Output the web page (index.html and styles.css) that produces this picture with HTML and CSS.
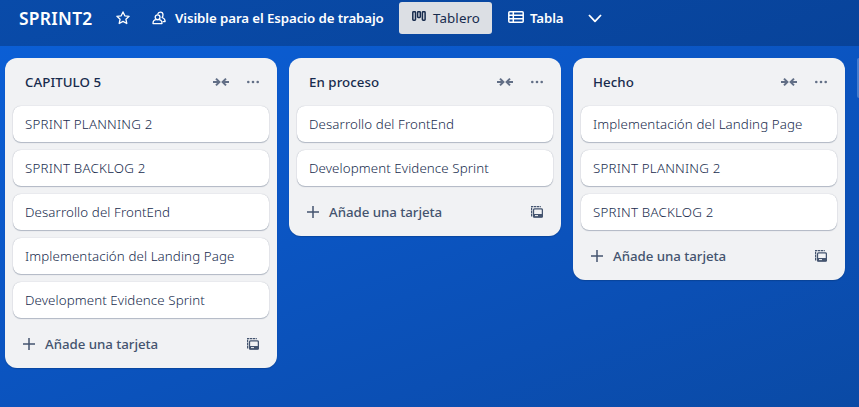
FILE: index.html
```
<!DOCTYPE html>
<html lang="es">
<head>
<meta charset="utf-8">
<title>SPRINT2</title>
<link rel="stylesheet" href="styles.css">
</head>
<body>
<svg class="defs" width="0" height="0" aria-hidden="true">
  <symbol id="collapse" viewBox="0 0 18 10"><path d="M1 5h6M4 1.6 7.4 5 4 8.4M17 5h-6M14 1.6 10.6 5l3.4 3.4" fill="none" stroke="currentColor" stroke-width="2"/></symbol>
  <symbol id="more" viewBox="0 0 12 4"><circle cx="1.3" cy="2" r="1.3"/><circle cx="6" cy="2" r="1.3"/><circle cx="10.7" cy="2" r="1.3"/></symbol>
  <symbol id="plus" viewBox="0 0 12 12"><path d="M6 0v12M0 6h12" fill="none" stroke="currentColor" stroke-width="1.5"/></symbol>
  <symbol id="template" viewBox="0 0 12 12"><path d="M.6 10.4V.6h9.2" fill="none" stroke="currentColor" stroke-width="1.2" stroke-dasharray="2.4 .6"/><rect x="2.5" y="2.9" width="8.9" height="8.3" rx="1" fill="none" stroke="currentColor" stroke-width="1.3"/><path d="M2.5 8h9v3.4h-9z"/><path d="M4 9.6h3" stroke="#f1f2f4" stroke-width="1"/></symbol>
</svg>
<header class="bar">
  <h1 class="title">SPRINT2</h1>
  <svg class="star" viewBox="0 0 14 14"><path d="m7 .9 1.8 3.9 4.3.5-3.2 2.9.9 4.3L7 10.4l-3.8 2.1.9-4.3L.9 5.3l4.3-.5z"/></svg>
  <svg class="people" viewBox="0 0 14 14"><path d="M1 12.6c0-2.4 1.3-3.9 3.3-3.9h2.4c2 0 3.3 1.5 3.3 3.9z"/><circle cx="5.6" cy="6.2" r="2.4"/><path d="M5.6 3.4C6 1.9 7 1.1 8.3 1.1c1.6 0 2.7 1.2 2.7 2.7 0 1.1-.3 2-.9 2.7 1.9.6 3 1.9 3 4.1h-2.5"/></svg>
  <span class="visibility">Visible para el Espacio de trabajo</span>
  <button class="view-active"><svg class="board-icon" viewBox="0 0 14 11"><rect x=".8" y=".8" width="2.7" height="8.4" rx=".7"/><rect x="5.6" y=".8" width="2.7" height="5.6" rx=".7"/><rect x="10.4" y=".8" width="2.7" height="8.4" rx=".7"/></svg><span>Tablero</span></button>
  <svg class="table-icon" viewBox="0 0 16 12"><rect x=".8" y=".8" width="14.4" height="10.4" rx="1"/><path d="M1 4.2h14M1 7.7h14M5.3 1v10"/></svg>
  <span class="table-label">Tabla</span>
  <svg class="chevron" viewBox="0 0 14 9"><path d="m1 1 6 6.4L13 1"/></svg>
</header>
<main class="board">
  <section class="list">
    <div class="head"><h2>CAPITULO 5</h2><svg class="collapse"><use href="#collapse"/></svg><svg class="more"><use href="#more"/></svg></div>
    <div class="card"><span class="caps">SPRINT PLANNING 2</span></div>
    <div class="card"><span class="caps">SPRINT BACKLOG 2</span></div>
    <div class="card"><span>Desarrollo del FrontEnd</span></div>
    <div class="card"><span>Implementación del Landing Page</span></div>
    <div class="card"><span>Development Evidence Sprint</span></div>
    <div class="foot"><svg class="plus"><use href="#plus"/></svg><span>Añade una tarjeta</span><svg class="template"><use href="#template"/></svg></div>
  </section>
  <section class="list">
    <div class="head"><h2>En proceso</h2><svg class="collapse"><use href="#collapse"/></svg><svg class="more"><use href="#more"/></svg></div>
    <div class="card"><span>Desarrollo del FrontEnd</span></div>
    <div class="card"><span>Development Evidence Sprint</span></div>
    <div class="foot"><svg class="plus"><use href="#plus"/></svg><span>Añade una tarjeta</span><svg class="template"><use href="#template"/></svg></div>
  </section>
  <section class="list">
    <div class="head"><h2>Hecho</h2><svg class="collapse"><use href="#collapse"/></svg><svg class="more"><use href="#more"/></svg></div>
    <div class="card"><span>Implementación del Landing Page</span></div>
    <div class="card"><span class="caps">SPRINT PLANNING 2</span></div>
    <div class="card"><span class="caps">SPRINT BACKLOG 2</span></div>
    <div class="foot"><svg class="plus"><use href="#plus"/></svg><span>Añade una tarjeta</span><svg class="template"><use href="#template"/></svg></div>
  </section>
  <div class="add-list"></div>
</main>
</body>
</html>
```
FILE: styles.css
```
* { box-sizing: border-box; }
body {
  margin: 0;
  height: 407px;
  overflow: hidden;
  font: 13.3px/20px "Noto Sans", "Open Sans", sans-serif;
  color: #172b4d;
  background: linear-gradient(160deg, #0b60d8 0%, #0b58c9 35%, #0b4fb4 75%, #0a4aa5 100%);
}
.defs { position: absolute; }
svg { display: block; flex: none; }
h1, h2 { margin: 0; }
span, h1, h2 { white-space: nowrap; }
.bar {
  height: 46px;
  padding: 0 0 10px 19px;
  display: flex;
  align-items: center;
  color: #fff;
  background: linear-gradient(160deg, #094ba9, #08439a);
}
.bar > svg { fill: none; stroke: currentColor; stroke-width: 1.3; stroke-linejoin: round; }
.title { width: 97px; font-size: 17.4px; line-height: 24px; font-weight: 600; letter-spacing: .3px; }
.star { width: 14px; height: 14px; }
.people { width: 14px; height: 14px; margin-left: 22px; }
.visibility { width: 224px; margin-left: 9px; font-weight: 600; letter-spacing: -.1px; }
.view-active {
  width: 93px;
  height: 32px;
  padding: 0 0 0 13px;
  display: flex;
  align-items: center;
  gap: 7px;
  border: 0;
  border-radius: 3px;
  color: #172b4d;
  background: #dcdfe4;
  font: 400 13.3px/20px "Noto Sans", "Open Sans", sans-serif;
  letter-spacing: .12px;
}
.board-icon { width: 14px; height: 11px; margin-bottom: 3px; fill: none; stroke: currentColor; stroke-width: 1.5; }
.table-icon { width: 16px; height: 12px; margin: 0 6px 2px 16px; }
.bar > .table-icon { stroke-width: 1.5; }
.table-label { width: 34px; font-weight: 600; letter-spacing: -.15px; }
.chevron { width: 14px; height: 9px; margin-left: 24px; }
.bar > .chevron { stroke-width: 1.8; }
.board { display: flex; align-items: flex-start; gap: 12px; padding: 12px 0 0 5px; }
.list {
  flex: none;
  width: 272px;
  padding: 0 8px 8px;
  display: flex;
  flex-direction: column;
  gap: 8px;
  border-radius: 12px;
  background: #f1f2f4;
  box-shadow: 0 1px 1px #091e4240;
}
.head { height: 40px; padding: 8px 10px 0 12px; display: flex; align-items: center; color: #626f86; fill: currentColor; }
.head h2 { flex: 1; color: #172b4d; font-size: 13.3px; line-height: 20px; font-weight: 500; letter-spacing: .05px; }
.collapse { width: 18px; height: 10px; margin-right: 17px; }
.more { width: 12px; height: 4px; }
.card {
  height: 36px;
  padding: 8px 12px;
  border-radius: 8px;
  background: #fff;
  box-shadow: 0 1px 1px #091e4240, 0 0 1px #091e424f;
  font-weight: 330;
  letter-spacing: .1px;
}
.caps { letter-spacing: .2px; }
.foot { height: 32px; margin-top: 2px; padding: 0 10px; display: flex; align-items: center; color: #44546f; fill: currentColor; font-weight: 500; }
.foot span { flex: 1; margin-left: 10px; letter-spacing: -.05px; }
.plus, .template { width: 12px; height: 12px; }
.add-list { flex: 1; min-width: 0; height: 40px; border-radius: 12px 0 0 12px; background: #ffffff3d; }
```
